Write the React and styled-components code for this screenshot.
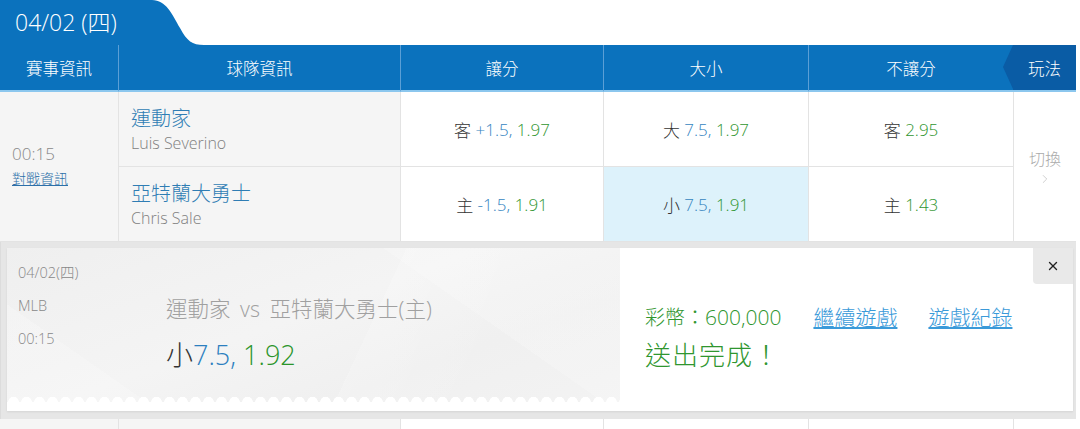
import React from 'react';
import styled, { createGlobalStyle } from 'styled-components';
import { X, ChevronRight } from 'lucide-react';

const GlobalStyle = createGlobalStyle`
  body {
    margin: 0;
    background: #fff;
    font-family: "Open Sans", "Noto Sans CJK TC", sans-serif;
    font-weight: 300;
  }
`;

const Page = styled.div`
  width: 1080px;
  height: 429px;
  overflow: hidden;
`;

const TabBar = styled.div`
  display: flex;
  height: 45px;
`;

const TabLabel = styled.div`
  width: 150px;
  background: #0b72bd;
  color: #fff;
  font-size: 23px;
  line-height: 45px;
  padding-left: 15px;
  box-sizing: border-box;
  white-space: nowrap;
`;

const TabCurve = styled.svg`
  display: block;
  width: 56px;
  height: 45px;
`;

const Table = styled.div`
  width: 1076px;
  display: grid;
  grid-template-columns: 118px 282px 203px 205px 205px 63px;
`;

const HeadCell = styled.div`
  position: relative;
  height: 45px;
  display: flex;
  align-items: center;
  justify-content: center;
  background: ${p => (p.$dark ? '#0a5ca5' : '#0b72bd')};
  color: #fff;
  font-size: 16.5px;
  border-left: ${p => (p.$first ? 'none' : '1px solid #5b9fd6')};
  border-bottom: 2px solid #8cc7ee;
  ${p =>
    p.$dark &&
    `
    border-left: none;
    &::before {
      content: '';
      position: absolute;
      left: -10px;
      top: 0;
      border-style: solid;
      border-width: 22.5px 10px 22.5px 0;
      border-color: transparent #0a5ca5 transparent transparent;
    }
  `}
`;

const Cell = styled.div`
  background: ${p => (p.$bg ? p.$bg : '#fff')};
  border-left: ${p => (p.$first ? 'none' : '1px solid #e3e3e3')};
  border-bottom: 1px solid #e3e3e3;
  box-sizing: border-box;
  height: ${p => (p.$span ? 150 : 75)}px;
  grid-row: ${p => (p.$span ? 'span 2' : 'auto')};
  display: flex;
  align-items: center;
  justify-content: ${p => (p.$left ? 'flex-start' : 'center')};
`;

const TimeBlock = styled.div`
  padding-left: 12px;
  margin-top: -4px;
  display: flex;
  flex-direction: column;
  gap: 3px;
`;

const Time = styled.span`
  font-size: 17px;
  color: #888;
`;

const VsLink = styled.a`
  font-size: 14px;
  color: #2c6fa8;
  text-decoration: underline;
`;

const Team = styled.div`
  padding-left: 12px;
  margin-top: 1px;
  display: flex;
  flex-direction: column;
`;

const TeamName = styled.span`
  font-size: 20px;
  line-height: 26px;
  color: #2f7db4;
`;

const Pitcher = styled.span`
  font-size: 16px;
  line-height: 22px;
  color: #808080;
`;

const Odds = styled.span`
  font-size: ${p => p.$size || 17}px;
  color: ${p => p.$c || '#333'};
  white-space: pre;
`;

const Switch = styled.div`
  display: flex;
  flex-direction: column;
  align-items: center;
  gap: 2px;
  color: #aaa;
  font-size: 16px;
  margin-top: -2px;
`;

const PopupWrap = styled.div`
  width: 1076px;
  box-sizing: border-box;
  background: #e6e6e6;
  border-left: 1px solid #dcdcdc;
  padding: 6px 3px 8px 6px;
`;

const Card = styled.div`
  position: relative;
  display: flex;
  height: 163px;
  background: #fff;
  box-shadow: 0 1px 2px rgba(0, 0, 0, 0.08);
`;

const Ticket = styled.div`
  width: 613px;
  display: flex;
  flex-direction: column;
  background:
    linear-gradient(115deg, transparent 58%, rgba(255, 255, 255, 0.18) 58%, transparent 78%),
    linear-gradient(35deg, rgba(255, 255, 255, 0.2) 18%, transparent 18%, transparent 72%, rgba(255, 255, 255, 0.18) 72%),
    linear-gradient(160deg, #efefef, #f4f4f4 45%, #f0f0f0 70%, #f3f3f3);
`;

const TicketBody = styled.div`
  flex: 1;
  display: flex;
  padding: 14px 0 0 11px;
`;

const MetaCol = styled.div`
  width: 148px;
  display: flex;
  flex-direction: column;
  gap: 12px;
`;

const Meta = styled.span`
  font-size: 14.5px;
  line-height: 21px;
  color: #888;
`;

const BetCol = styled.div`
  padding-top: 33px;
  display: flex;
  flex-direction: column;
  gap: 11px;
`;

const Match = styled.span`
  font-size: 21.5px;
  line-height: 28px;
  color: #a0a0a0;
  word-spacing: 4px;
`;

const Scallop = styled.div`
  height: 16px;
  background:
    radial-gradient(circle at 50% 100%, #fff 5px, transparent 5.5px) top left / 13px 7px repeat-x,
    linear-gradient(#fff, #fff) bottom / 100% 9px no-repeat;
`;

const Result = styled.div`
  padding: 53px 0 0 25px;
  display: flex;
  flex-direction: column;
  gap: 4px;
`;

const ResultRow = styled.div`
  display: flex;
  align-items: baseline;
`;

const Coin = styled.span`
  color: #2f962f;
  font-size: ${p => p.$size}px;
`;

const Action = styled.a`
  font-size: 21px;
  color: #3a9ad9;
  text-decoration: underline;
  margin-left: ${p => p.$gap}px;
`;

const Done = styled.span`
  font-size: 26px;
  color: #2f962f;
  letter-spacing: 1px;
`;

const Close = styled.button`
  position: absolute;
  top: 0;
  right: 0;
  width: 40px;
  height: 36px;
  border: none;
  background: #e9e9e9;
  border-bottom-left-radius: 4px;
  display: flex;
  align-items: center;
  justify-content: center;
  color: #222;
  padding: 0;
`;

const OddsCell = ({ side, line, price, bg }) => (
  <Cell $bg={bg}>
    <Odds>{side} </Odds>
    {line && <Odds $c="#3585bf">{line} </Odds>}
    <Odds $c="#2f952f">{price}</Odds>
  </Cell>
);

export default function App() {
  return (
    <Page>
      <GlobalStyle />
      <TabBar>
        <TabLabel>04/02 (四)</TabLabel>
        <TabCurve viewBox="0 0 56 45">
          <path d="M0 0 H2 C16 0 22 14 30 28 C37 41 42 45 54 45 H0 Z" fill="#0b72bd" />
        </TabCurve>
      </TabBar>
      <Table>
        <HeadCell $first>賽事資訊</HeadCell>
        <HeadCell>球隊資訊</HeadCell>
        <HeadCell>讓分</HeadCell>
        <HeadCell>大小</HeadCell>
        <HeadCell>不讓分</HeadCell>
        <HeadCell $dark>玩法</HeadCell>

        <Cell $first $span $left $bg="#f5f5f5">
          <TimeBlock>
            <Time>00:15</Time>
            <VsLink>對戰資訊</VsLink>
          </TimeBlock>
        </Cell>
        <Cell $left $bg="#f5f5f5">
          <Team>
            <TeamName>運動家</TeamName>
            <Pitcher>Luis Severino</Pitcher>
          </Team>
        </Cell>
        <OddsCell side="客" line="+1.5," price="1.97" />
        <OddsCell side="大" line="7.5," price="1.97" />
        <OddsCell side="客" price="2.95" />
        <Cell $span>
          <Switch>
            切換
            <ChevronRight size={14} strokeWidth={1.2} color="#bbb" />
          </Switch>
        </Cell>
        <Cell $left $bg="#f5f5f5">
          <Team>
            <TeamName>亞特蘭大勇士</TeamName>
            <Pitcher>Chris Sale</Pitcher>
          </Team>
        </Cell>
        <OddsCell side="主" line="-1.5," price="1.91" />
        <OddsCell side="小" line="7.5," price="1.91" bg="#ddf2fb" />
        <OddsCell side="主" price="1.43" />
      </Table>

      <PopupWrap>
        <Card>
          <Ticket>
            <TicketBody>
              <MetaCol>
                <Meta>04/02(四)</Meta>
                <Meta>MLB</Meta>
                <Meta>00:15</Meta>
              </MetaCol>
              <BetCol>
                <Match>運動家 vs 亞特蘭大勇士(主)</Match>
                <div>
                  <Odds $size={27}>小</Odds>
                  <Odds $size={27} $c="#2c7fbf">7.5, </Odds>
                  <Odds $size={27} $c="#2b952b">1.92</Odds>
                </div>
              </BetCol>
            </TicketBody>
            <Scallop />
          </Ticket>
          <Result>
            <ResultRow>
              <Coin $size={20}>彩幣：</Coin>
              <Coin $size={21}>600,000</Coin>
              <Action $gap={32}>繼續遊戲</Action>
              <Action $gap={31}>遊戲紀錄</Action>
            </ResultRow>
            <Done>送出完成！</Done>
          </Result>
          <Close>
            <X size={14} strokeWidth={2.4} />
          </Close>
        </Card>
      </PopupWrap>

      <Table>
        <Cell $first $span $bg="#f5f5f5" />
        <Cell $bg="#f5f5f5" />
        <Cell />
        <Cell />
        <Cell />
        <Cell $span />
      </Table>
    </Page>
  );
}
